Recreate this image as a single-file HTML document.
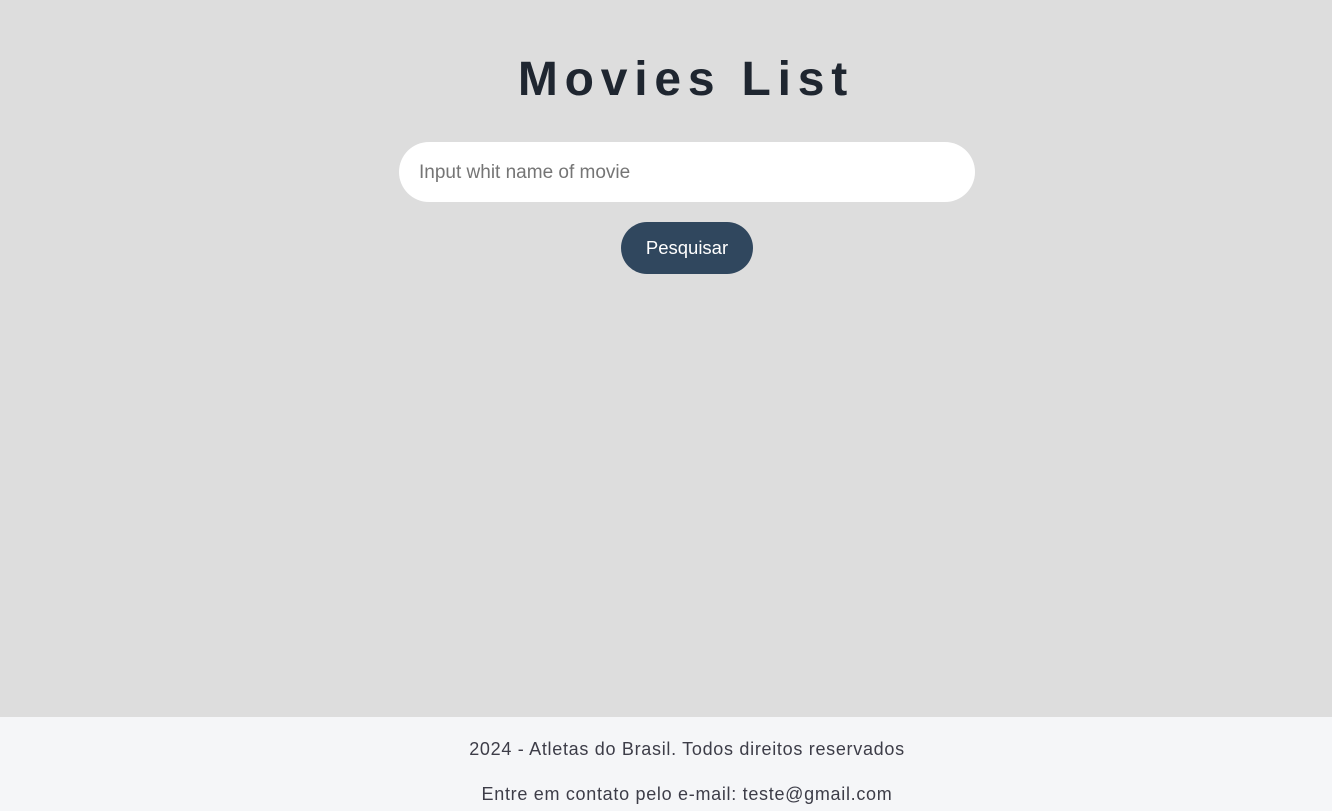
<!DOCTYPE html>
<html><head><style>
html,body{margin:0;padding:0;}
body{width:1332px;height:811px;background:#dddddd;position:relative;overflow:hidden;font-family:"Liberation Sans",sans-serif;}
h1{position:absolute;top:52px;left:0;width:1332px;margin:0;text-align:center;font-size:48px;font-weight:bold;letter-spacing:6.8px;color:#1f2630;line-height:56px;text-indent:40px;}
.inp{position:absolute;left:399px;top:142px;width:576px;height:60px;background:#fff;border-radius:30px;}
.inp span{position:absolute;left:20px;top:21px;font-size:19px;color:#757575;line-height:20px;}
.btn{position:absolute;left:621px;top:222px;width:132px;height:52px;background:#30475e;border-radius:26px;color:#fff;font-size:18.5px;text-align:center;line-height:52px;}
footer{position:absolute;left:0;top:717px;width:1332px;height:94px;background:#f5f6f8;color:#3d3d48;font-size:18px;text-align:center;letter-spacing:0.7px;}
footer p{margin:0;position:absolute;left:21px;width:100%;}
</style></head><body>
<h1>Movies List</h1>
<div class="inp"><span>Input whit name of movie</span></div>
<div class="btn">Pesquisar</div>
<footer>
<p style="top:22px">2024 - Atletas do Brasil. Todos direitos reservados</p>
<p style="top:67px">Entre em contato pelo e-mail: teste@gmail.com</p>
</footer>
</body></html>
